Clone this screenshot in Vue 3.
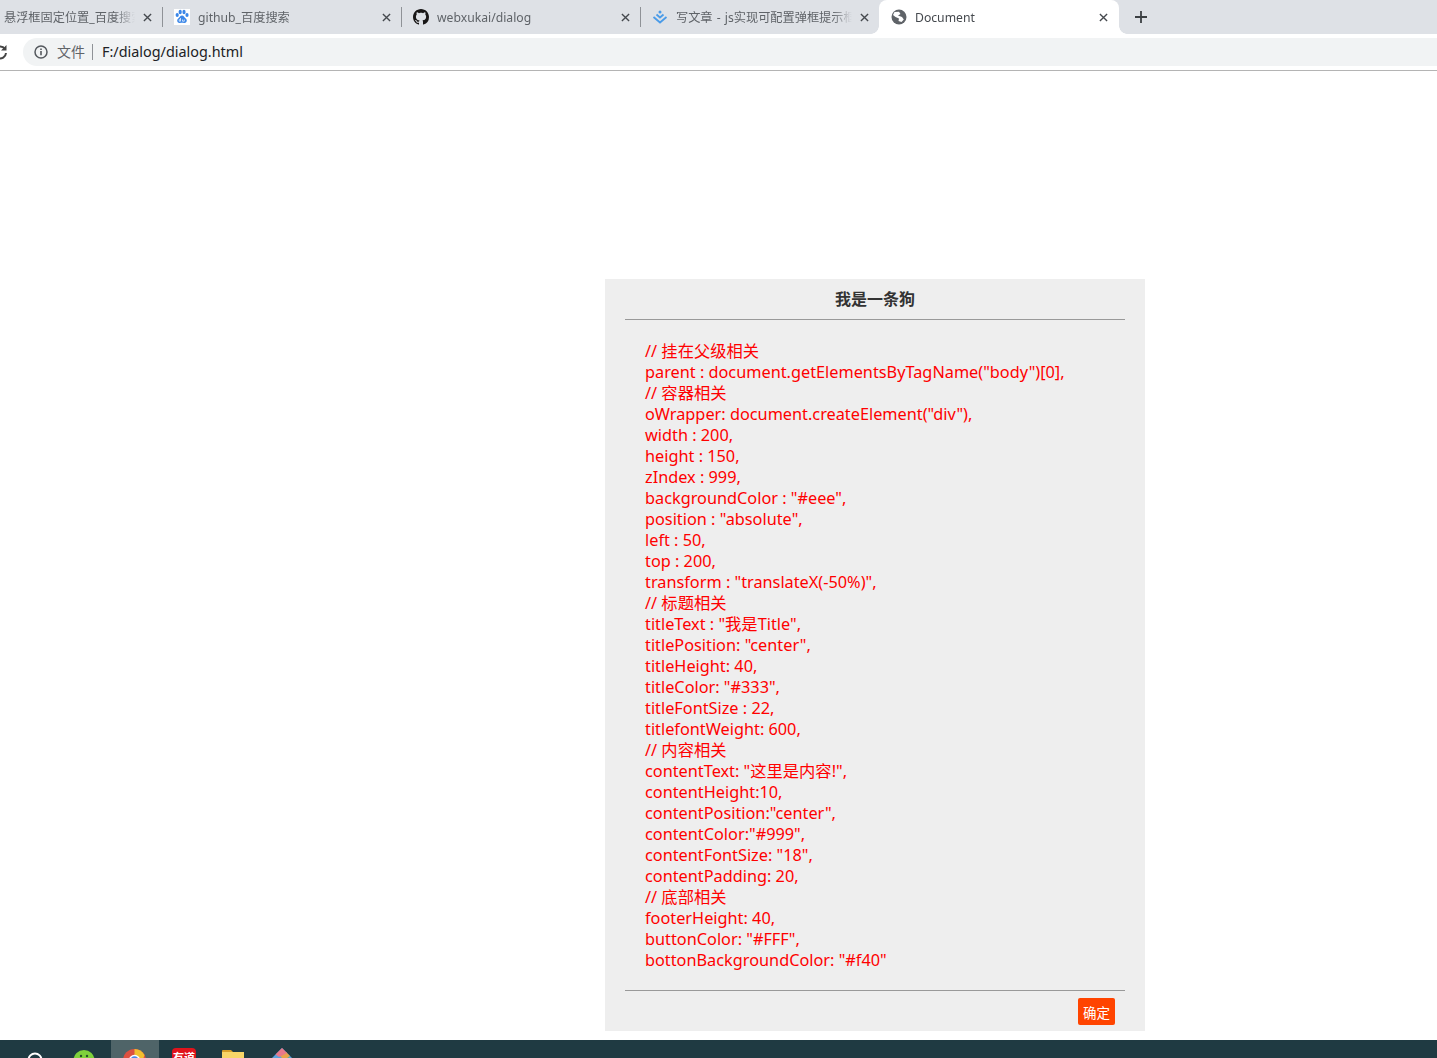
<script setup>
const tabs = [
  { t: '悬浮框固定位置_百度搜索', icon: '', cls: 'first' },
  { t: 'github_百度搜索', icon: 'paw', cls: '' },
  { t: 'webxukai/dialog', icon: 'gh', cls: '' },
  { t: '写文章 - js实现可配置弹框提示框', icon: 'csdn', cls: 'last' },
]
const lines = [
  '// 挂在父级相关', 'parent : document.getElementsByTagName("body")[0],', '// 容器相关',
  'oWrapper: document.createElement("div"),', 'width : 200,', 'height : 150,', 'zIndex : 999,',
  'backgroundColor : "#eee",', 'position : "absolute",', 'left : 50,', 'top : 200,',
  'transform : "translateX(-50%)",', '// 标题相关', 'titleText : "我是Title",',
  'titlePosition: "center",', 'titleHeight: 40,', 'titleColor: "#333",', 'titleFontSize : 22,',
  'titlefontWeight: 600,', '// 内容相关', 'contentText: "这里是内容!",', 'contentHeight:10,',
  'contentPosition:"center",', 'contentColor:"#999",', 'contentFontSize: "18",', 'contentPadding: 20,',
  '// 底部相关', 'footerHeight: 40,', 'buttonColor: "#FFF",', 'bottonBackgroundColor: "#f40"',
]
</script>

<template>
  <div class="app">
    <div class="tabbar">
      <div v-for="tab in tabs" :key="tab.t" class="tab" :class="tab.cls">
        <svg v-if="tab.icon === 'paw'" class="fav" viewBox="0 0 16 16">
          <rect width="16" height="16" fill="#fff" />
          <g fill="#3a86e8">
            <ellipse cx="3.200" cy="6" rx="1.600" ry="2.100" />
            <ellipse cx="6.200" cy="3" rx="1.600" ry="2.200" />
            <ellipse cx="10" cy="3" rx="1.600" ry="2.200" />
            <ellipse cx="13" cy="6" rx="1.600" ry="2.100" />
            <path d="M8 6.500c-2 0-2.400 2-4 3.300-1.600 1.400-.6 4.700 2 4.200.8-.2 1.300-.3 2-.3s1.300.1 2 .3c2.600.5 3.600-2.800 2-4.200-1.600-1.300-2-3.300-4-3.300z" />
          </g>
          <path d="M6.500 9v3.200H5.200v-1.500h1.300M8.500 10.500v1.700h1.800v-1.700" fill="none" stroke="#fff" stroke-width=".7" />
        </svg>
        <svg v-else-if="tab.icon === 'gh'" class="fav" viewBox="0 0 16 16">
          <path fill="#191717" d="M8 0C3.580 0 0 3.580 0 8c0 3.540 2.290 6.530 5.470 7.590.4.070.55-.17.55-.38 0-.19-.01-.82-.01-1.490-2.010.37-2.530-.49-2.690-.94-.09-.23-.48-.94-.82-1.130-.28-.15-.68-.52-.01-.53.630-.01 1.080.58 1.230.82.720 1.210 1.870.870 2.330.660.070-.52.280-.870.510-1.070-1.780-.2-3.640-.89-3.640-3.950 0-.870.310-1.590.820-2.150-.08-.2-.36-1.020.08-2.120 0 0 .670-.21 2.200.820.640-.18 1.320-.27 2-.27s1.360.09 2 .27c1.530-1.040 2.200-.82 2.200-.82.440 1.100.160 1.920.080 2.120.510.560.820 1.270.820 2.150 0 3.070-1.870 3.750-3.650 3.950.290.250.540.730.540 1.480 0 1.070-.01 1.930-.01 2.200 0 .210.150.460.550.380A8.010 8.010 0 0 0 16 8c0-4.420-3.580-8-8-8z" />
        </svg>
        <svg v-else-if="tab.icon === 'csdn'" class="fav" viewBox="0 0 16 16">
          <circle cx="8" cy="3" r="1.500" fill="#4a9be8" />
          <path d="M4.500 5.500 8 8.500l3.500-3M1.500 8 8 13.500 14.500 8" fill="none" stroke="#4a9be8" stroke-width="1.800" />
        </svg>
        <span class="tab-title">{{ tab.t }}</span>
        <svg class="close" viewBox="0 0 10 10"><path d="M1 1l8 8M9 1l-8 8" /></svg>
      </div>
      <div class="tab active">
        <svg class="fav" viewBox="0 0 16 16">
          <circle cx="8" cy="8" r="7.500" fill="#5f6368" />
          <path fill="#fff" d="M3.500 3 8 2.800 9.500 5 7 6.500l4 1.500 1.800 2.500L10.500 13 7.500 12 8 9.500 4.500 8 2 6z" />
        </svg>
        <span class="tab-title doc">Document</span>
        <svg class="close" viewBox="0 0 10 10"><path d="M1 1l8 8M9 1l-8 8" /></svg>
      </div>
      <svg class="plus" viewBox="0 0 12 12"><path d="M6 0v12M0 6h12" /></svg>
    </div>

    <div class="toolbar">
      <svg class="reload" viewBox="0 0 16 16">
        <path d="M13 5.200A6 6 0 1 0 14 9" fill="none" stroke="#444" stroke-width="2" />
        <path d="M14.500 1v5.500H9z" fill="#444" />
      </svg>
      <div class="omnibox">
        <svg class="info" viewBox="0 0 14 14">
          <circle cx="7" cy="7" r="6" fill="none" stroke="#55595e" stroke-width="1.500" />
          <path d="M7 6v4.300M7 3.400v1.600" stroke="#55595e" stroke-width="1.600" />
        </svg>
        <span class="scheme">文件</span>
        <span class="url">F:/dialog/dialog.html</span>
      </div>
    </div>

    <div class="page">
      <section class="dialog">
        <h3 class="title"><span>我是一条狗</span></h3>
        <div class="content">
          <div v-for="(l, i) in lines" :key="i">{{ l }}</div>
        </div>
        <div class="footer"><button class="ok">确定</button></div>
      </section>
    </div>

    <div class="taskbar">
      <div class="task"><svg viewBox="0 0 24 24"><circle cx="8" cy="26" r="6.500" fill="none" stroke="#fff" stroke-width="2" /></svg></div>
      <div class="task"><svg viewBox="0 0 24 24"><ellipse cx="9" cy="26" rx="10.500" ry="10" fill="#7fd13b" /><circle cx="6" cy="22" r="1.200" fill="#27502a" /><circle cx="12" cy="22" r="1.200" fill="#27502a" /></svg></div>
      <div class="task on"><svg viewBox="0 0 24 24"><circle cx="11.500" cy="26.500" r="11.500" fill="#dd5040" /><path d="M11.500 15a11.500 11.500 0 0 1 10 6l-1 3H11.500z" fill="#f3c02f" /><circle cx="11.500" cy="26.500" r="5" fill="#4a86e8" stroke="#fff" stroke-width="1.500" /></svg></div>
      <div class="task"><svg viewBox="0 0 24 24"><rect x="1" y="14" width="24" height="18" rx="4" fill="#e0141c" /><text x="13" y="28" class="red-text">有道</text></svg></div>
      <div class="task"><svg viewBox="0 0 24 24"><path d="M3 26v-9a1 1 0 0 1 1-1h8l2 2h11v8z" fill="#d9a02a" /><rect x="3" y="18" width="22" height="8" fill="#f8d568" /></svg></div>
      <div class="task"><svg viewBox="0 0 24 24"><path d="M15 14 27 26 15 38 3 26z" fill="#5aa1dc" /><path d="M15 20 27 26 15 38z" fill="#5fbf7a" /><path d="M19 18 23 22 17 26 13 22z" fill="#e8a24a" /><path d="M15 14 20 19 12 23 8.500 20.500z" fill="#e8788a" /></svg></div>
    </div>
  </div>
</template>

<style>
html, body { margin: 0; background: #fff; }
</style>

<style scoped>
.app {
  width: 1437px;
  height: 1058px;
  display: flex;
  flex-direction: column;
  overflow: hidden;
  font-family: "Noto Sans", "Noto Sans CJK SC", sans-serif;
}
.tabbar {
  height: 34px;
  flex: none;
  background: #dee1e6;
  display: flex;
  align-items: stretch;
}
.tab {
  width: 239px;
  box-sizing: border-box;
  display: flex;
  align-items: center;
  padding: 0 11px 0 11px;
  position: relative;
  color: #5f6368;
  font-size: 12.2px;
  word-spacing: 1px;
}
.tab::after {
  content: "";
  position: absolute;
  right: 0;
  top: 7px;
  height: 20px;
  width: 1px;
  background: #8f9297;
}
.tab.first { width: 163px; padding-left: 4px; }
.tab.last { width: 238px; padding-right: 10px; }
.tab.last::after { display: none; }
.tab.active {
  width: 240px;
  background: #fff;
  border-radius: 8px 8px 0 0;
  color: #45494e;
  padding: 0 11px 0 12px;
}
.tab.active::before,
.tab.active::after {
  content: "";
  display: block;
  position: absolute;
  bottom: 0;
  top: auto;
  width: 8px;
  height: 8px;
}
.tab.active::before {
  left: -8px;
  background: radial-gradient(circle at 0 0, transparent 7.500px, #fff 8px);
}
.tab.active::after {
  right: -8px;
  background: radial-gradient(circle at 100% 0, transparent 7.500px, #fff 8px);
}
.fav { width: 16px; height: 16px; flex: none; margin-right: 8px; }
.tab-title {
  flex: 1;
  min-width: 0;
  white-space: nowrap;
  overflow: hidden;
  -webkit-mask-image: linear-gradient(to right, #000 calc(100% - 20px), transparent);
  mask-image: linear-gradient(to right, #000 calc(100% - 20px), transparent);
}
.close { width: 9px; height: 9px; flex: none; margin: 0 0 0 8px; }
.close path { stroke: #45494e; stroke-width: 1.500; fill: none; }
.plus { width: 12px; height: 12px; margin: 11px 0 0 16px; }
.plus path { stroke: #3c4043; stroke-width: 1.800; fill: none; }
.toolbar {
  height: 37px;
  flex: none;
  box-sizing: border-box;
  background: #fff;
  border-bottom: 1px solid #b4b4b4;
  display: flex;
  align-items: center;
  padding: 0 0 1px 0;
}
.reload { width: 16px; height: 16px; margin-left: -8px; margin-right: 15px; flex: none; }
.omnibox {
  flex: 1;
  height: 28px;
  background: #f1f3f4;
  border-radius: 14px 0 0 14px;
  display: flex;
  align-items: center;
  padding-left: 11px;
}
.info { width: 14px; height: 14px; flex: none; margin-right: 9px; }
.scheme {
  font-size: 14px;
  color: #5f6368;
  padding-right: 7px;
  border-right: 1px solid #8f9297;
  line-height: 16px;
  margin-right: 9px;
}
.url { font-size: 14.4px; color: #202124; }
.page {
  flex: 1;
  min-height: 0;
  padding: 208px 0 0 605px;
  box-sizing: border-box;
  background: #fff;
}
.dialog {
  width: 540px;
  height: 752px;
  background: #eee;
  padding: 0 20px;
  box-sizing: border-box;
}
.title {
  margin: 0;
  height: 41px;
  box-sizing: border-box;
  border-bottom: 1px solid #999;
  text-align: center;
  line-height: 40px;
  font-size: 16px;
  font-weight: 600;
  color: #333;
}
.content {
  padding: 21px 20px 19px;
  font-size: 16.3px;
  line-height: 21px;
  height: 670px;
  box-sizing: border-box;
  color: #f00;
  white-space: nowrap;
}
.footer {
  height: 41px;
  box-sizing: border-box;
  border-top: 1px solid #999;
  display: flex;
  justify-content: flex-end;
  padding: 7px 10px 0 0;
}
.ok {
  width: 37px;
  height: 27px;
  padding: 0;
  border: 0;
  border-radius: 2px;
  background: #f40;
  color: #fff;
  font: 13.5px "Noto Sans CJK SC", sans-serif;
}
.taskbar {
  height: 18px;
  flex: none;
  background: #1f3a42;
  display: flex;
  padding-left: 15px;
}
.task { width: 48px; height: 18px; display: flex; justify-content: center; overflow: hidden; }
.task.on { background: #4f6468; }
.task svg { width: 24px; height: 24px; flex: none; margin-top: -6px; overflow: visible; }
.red-text { font: 700 11px "Noto Sans CJK SC", sans-serif; fill: #fff; text-anchor: middle; }
</style>
